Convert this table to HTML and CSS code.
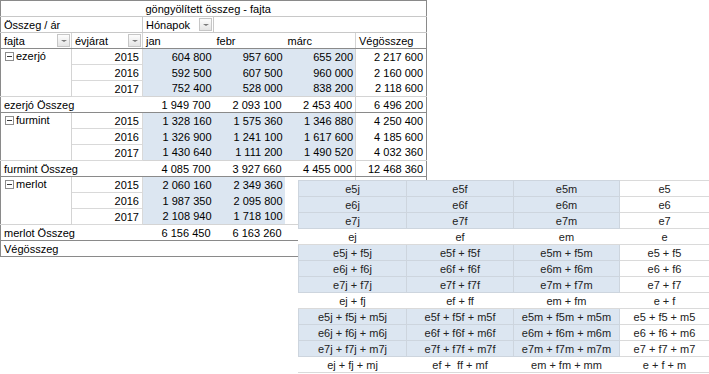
FILE: index.html
```html
<!DOCTYPE html>
<html lang="hu">
<head>
  <meta charset="UTF-8" />
  <title>göngyölített összeg</title>
  <link rel="stylesheet" href="styles.css">
</head>
<body>
  <div class="sheet">
    <table class="pivot">
      <colgroup>
        <col><col><col><col><col><col>
      </colgroup>
      <tr class="r-title">
        <td colspan="2"></td>
        <td colspan="4">göngyölített összeg - fajta</td>
      </tr>
      <tr class="r-meta">
        <td colspan="2">Összeg / ár</td>
        <td class="box"><div class="flt"><span>Hónapok</span><span class="dd"></span></div></td>
        <td colspan="3"></td>
      </tr>
      <tr class="r-head">
        <td class="sep"><div class="flt"><span>fajta</span><span class="dd"></span></div></td>
        <td class="sep"><div class="flt"><span>évjárat</span><span class="dd"></span></div></td>
        <td>jan</td>
        <td>febr</td>
        <td>márc</td>
        <td class="tot">Végösszeg</td>
      </tr>

      <tr>
        <td class="kind" rowspan="3"><span class="tog"></span>ezerjó</td>
        <td class="yr">2015</td>
        <td class="val">604 800</td><td class="val">957 600</td><td class="val">655 200</td>
        <td class="tot num">2 217 600</td>
      </tr>
      <tr>
        <td class="yr">2016</td>
        <td class="val">592 500</td><td class="val">607 500</td><td class="val">960 000</td>
        <td class="tot num">2 160 000</td>
      </tr>
      <tr>
        <td class="yr">2017</td>
        <td class="val">752 400</td><td class="val">528 000</td><td class="val">838 200</td>
        <td class="tot num">2 118 600</td>
      </tr>
      <tr class="sub">
        <td colspan="2">ezerjó Összeg</td>
        <td class="num">1 949 700</td><td class="num">2 093 100</td><td class="num">2 453 400</td>
        <td class="tot num">6 496 200</td>
      </tr>

      <tr>
        <td class="kind" rowspan="3"><span class="tog"></span>furmint</td>
        <td class="yr">2015</td>
        <td class="val">1 328 160</td><td class="val">1 575 360</td><td class="val">1 346 880</td>
        <td class="tot num">4 250 400</td>
      </tr>
      <tr>
        <td class="yr">2016</td>
        <td class="val">1 326 900</td><td class="val">1 241 100</td><td class="val">1 617 600</td>
        <td class="tot num">4 185 600</td>
      </tr>
      <tr>
        <td class="yr">2017</td>
        <td class="val">1 430 640</td><td class="val">1 111 200</td><td class="val">1 490 520</td>
        <td class="tot num">4 032 360</td>
      </tr>
      <tr class="sub">
        <td colspan="2">furmint Összeg</td>
        <td class="num">4 085 700</td><td class="num">3 927 660</td><td class="num">4 455 000</td>
        <td class="tot num">12 468 360</td>
      </tr>

      <tr>
        <td class="kind" rowspan="3"><span class="tog"></span>merlot</td>
        <td class="yr">2015</td>
        <td class="val">2 060 160</td><td class="val">2 349 360</td><td></td>
        <td class="tot num"></td>
      </tr>
      <tr>
        <td class="yr">2016</td>
        <td class="val">1 987 350</td><td class="val">2 095 800</td><td></td>
        <td class="tot num"></td>
      </tr>
      <tr>
        <td class="yr">2017</td>
        <td class="val">2 108 940</td><td class="val">1 718 100</td><td></td>
        <td class="tot num"></td>
      </tr>
      <tr class="sub">
        <td colspan="2">merlot Összeg</td>
        <td class="num">6 156 450</td><td class="num">6 163 260</td><td class="num"></td>
        <td class="tot num"></td>
      </tr>

      <tr class="grand">
        <td colspan="2">Végösszeg</td>
        <td></td><td></td><td></td><td class="tot"></td>
      </tr>
    </table>

    <div class="overlay">
      <table class="calc">
        <colgroup>
          <col class="c1"><col class="c2"><col class="c3"><col class="c4">
        </colgroup>
        <tr><td>e5j</td><td>e5f</td><td>e5m</td><td>e5</td></tr>
        <tr><td>e6j</td><td>e6f</td><td>e6m</td><td>e6</td></tr>
        <tr><td>e7j</td><td>e7f</td><td>e7m</td><td>e7</td></tr>
        <tr class="plain"><td>ej</td><td>ef</td><td>em</td><td>e</td></tr>
        <tr><td>e5j + f5j</td><td>e5f + f5f</td><td>e5m + f5m</td><td>e5 + f5</td></tr>
        <tr><td>e6j + f6j</td><td>e6f + f6f</td><td>e6m + f6m</td><td>e6 + f6</td></tr>
        <tr><td>e7j + f7j</td><td>e7f + f7f</td><td>e7m + f7m</td><td>e7 + f7</td></tr>
        <tr class="plain"><td>ej + fj</td><td>ef + ff</td><td>em + fm</td><td>e + f</td></tr>
        <tr><td>e5j + f5j + m5j</td><td>e5f + f5f + m5f</td><td>e5m + f5m + m5m</td><td>e5 + f5 + m5</td></tr>
        <tr><td>e6j + f6j + m6j</td><td>e6f + f6f + m6f</td><td>e6m + f6m + m6m</td><td>e6 + f6 + m6</td></tr>
        <tr><td>e7j + f7j + m7j</td><td>e7f + f7f + m7f</td><td>e7m + f7m + m7m</td><td>e7 + f7 + m7</td></tr>
        <tr class="plain"><td>ej + fj + mj</td><td>ef + &nbsp;ff + mf</td><td>em + fm + mm</td><td>e + f + m</td></tr>
      </table>
    </div>
  </div>
</body>
</html>
```

FILE: styles.css
```css
body {
  margin: 0;
  background: #fff;
  font-family: "Liberation Sans", Arial, sans-serif;
  font-size: 11px;
  color: #000;
}
.sheet {
  position: relative;
  width: 709px;
  height: 374px;
  overflow: hidden;
}

/* pivot */
.pivot {
  border-collapse: collapse;
  table-layout: fixed;
  width: 427px;
  border: 1px solid #8a8a8a;
}
.pivot col {
  width: 71px;
}
.pivot tr {
  height: 16px;
}
.pivot td {
  padding: 0 3px;
  line-height: 14px;
  white-space: nowrap;
  overflow: hidden;
  vertical-align: middle;
}
.r-title td,
.r-meta td {
  border-bottom: 1px solid #c8c8c8;
}
.r-meta .box {
  border: 1px solid #c8c8c8;
  padding-right: 1px;
}
.r-head td {
  border-bottom: 1px solid #8a8a8a;
}
.r-head .sep {
  border-right: 1px solid #d4d4d4;
  padding-right: 1px;
}
.flt {
  display: flex;
  justify-content: space-between;
  align-items: center;
}
.dd {
  width: 11px;
  height: 11px;
  border: 1px solid #c6c6c6;
  background: linear-gradient(#fdfdfd, #e4e4e4);
  display: flex;
  align-items: center;
  justify-content: center;
}
.dd::after {
  content: "";
  border-left: 3px solid transparent;
  border-right: 3px solid transparent;
  border-top: 2px solid #7a7a7a;
}
.kind {
  vertical-align: top !important;
  border-right: 1px solid #d4d4d4;
  padding-left: 4px !important;
}
.tog {
  display: inline-block;
  width: 7px;
  height: 7px;
  margin-right: 2px;
  border: 1px solid #8c8c8c;
  background: linear-gradient(#3a3a3a, #3a3a3a) center / 5px 1px no-repeat;
  vertical-align: -1px;
}
.yr {
  text-align: right;
  border: 1px solid #d9d9d9;
}
.val {
  text-align: right;
  background: #dce6f1;
  padding-right: 2px !important;
}
.num {
  text-align: right;
}
.tot {
  border-left: 1px solid #d4d4d4;
}
.sub td {
  border-top: 1px solid #d4d4d4;
  border-bottom: 1px solid #8a8a8a;
}
.grand td {
  border-top: 1px solid #8a8a8a;
}

/* floating block of formulas */
.overlay {
  position: absolute;
  left: 298px;
  top: 180px;
  right: 0;
  bottom: 0;
  background: #fff;
}
.calc {
  border-collapse: collapse;
  table-layout: fixed;
  width: 411px;
  border-top: 1px solid #c8c8c8;
  border-left: 1px solid #c8c8c8;
}
.calc .c1 { width: 108px; }
.calc .c2 { width: 107px; }
.calc .c3 { width: 106px; }
.calc .c4 { width: 90px; }
.calc tr {
  height: 16px;
}
.calc td {
  padding: 0;
  line-height: 14px;
  text-align: center;
  white-space: nowrap;
  color: #222;
  background: #dce6f1;
  border: 1px solid #cdd5de;
}
.calc td:last-child {
  background: #fff;
  border-color: #dadada;
}
.calc .plain td {
  background: #fff;
  border-left-color: #fff;
  border-right-color: #fff;
  border-top-color: #dadada;
  border-bottom-color: #dadada;
}
```
